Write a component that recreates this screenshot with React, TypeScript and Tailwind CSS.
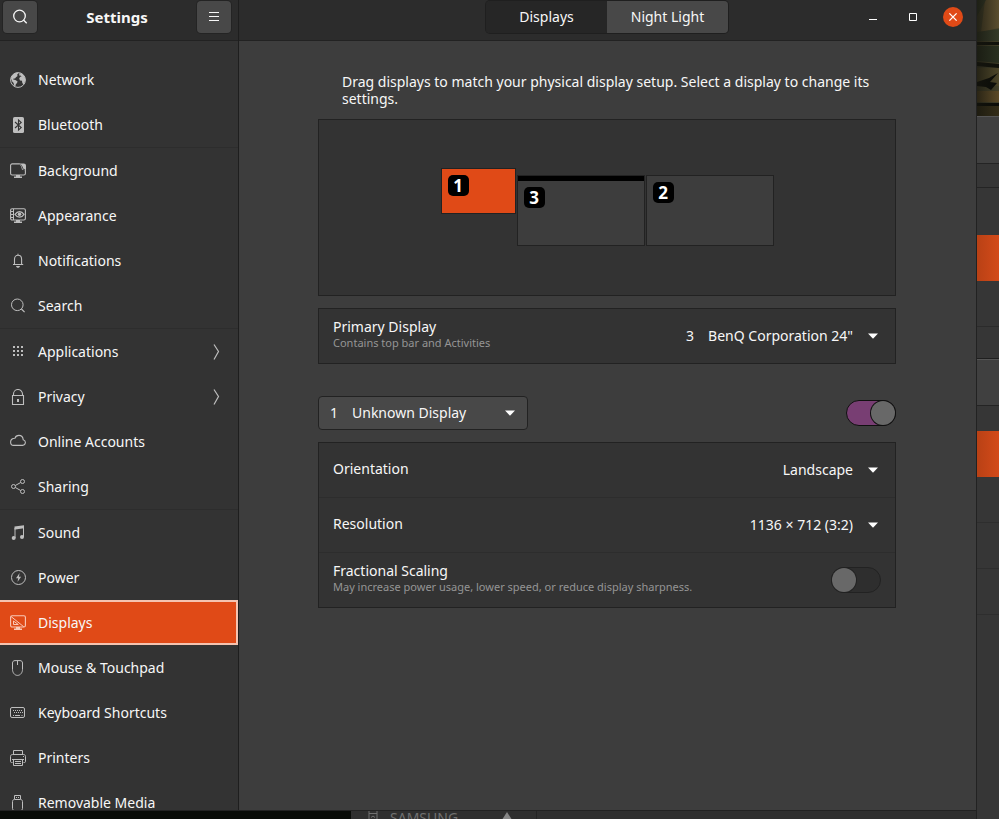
import { Fragment, useState } from "react";
import type { ReactNode } from "react";

function Icon({ children, className = "size-4" }: { children: ReactNode; className?: string }) {
  return (
    <svg
      viewBox="0 0 16 16"
      className={`${className} shrink-0`}
      fill="none"
      stroke="currentColor"
      strokeWidth="1"
      aria-hidden="true"
    >
      {children}
    </svg>
  );
}

const icons: Record<string, ReactNode> = {
  Network: (
    <Icon>
      <circle cx="8" cy="8" r="7.4" />
      <path
        fill="currentColor"
        stroke="none"
        d="M1 6.5C1.6 3.6 4 1 7.4.6L8.6 2 7 2.6 7.6 4 6 5.2 5 6.6 3.6 6.4 3.2 7.4 5.4 8 7.6 9.4 7 11 5.8 12.2 5.4 14.6 4 13.6 3.6 11 2.2 9.4ZM9.6 1 12.6 2 14.6 4.6 15.4 8 14.4 11.6 13.2 12.6 12.2 10.6 12 8.8 10 8.4 9.2 6.6 10.2 4.8 11.6 4.4 10.4 3.6 9.4 3.8 9.2 2.6Z"
      />
    </Icon>
  ),
  Bluetooth: (
    <Icon>
      <rect x="3" y="0" width="11" height="16" rx="1.6" fill="currentColor" stroke="none" />
      <path stroke="#333333" strokeWidth="1.1" d="M5 5l6.2 5.6L8.5 13V3l2.7 2.4L5 11" />
    </Icon>
  ),
  Background: (
    <Icon>
      <path d="M9.5.9H2.2A1.6 1.6 0 0 0 .6 2.5v7.9A1.6 1.6 0 0 0 2.2 12h11.6a1.6 1.6 0 0 0 1.6-1.6V6" strokeWidth="1.1" />
      <path fill="currentColor" stroke="none" d="M8.6.4h5.2A2.2 2.2 0 0 1 16 2.6v5.8c-1-1.2-2.4-1.6-4-1.6-.4-2.6-1.2-5-3.4-6.4ZM6 12h4v1.6h2V15H4v-1.4h2Z" />
      <path stroke="#333333" strokeWidth=".8" d="M10.6 1.4C12 3 12.800 5 13 6.200c.8 0 1.600.2 2.200.6" />
    </Icon>
  ),
  Appearance: (
    <Icon>
      <rect x=".6" y=".7" width="14.8" height="11.3" rx="1.5" strokeWidth="1.1" />
      <path d="M3.500 1v11M1 3.500h3M1 6.500h3M1 9.500h3" />
      <path strokeWidth="1.200" d="M5 6.400C6.500 4.200 8 3.600 9.600 3.600s3 .8 4.400 2.800C12.600 8.600 11.200 9.200 9.600 9.200S6.500 8.600 5 6.400Z" />
      <circle cx="9.5" cy="6.3" r="1.8" fill="currentColor" stroke="none" />
      <path fill="currentColor" stroke="none" d="M6 12h4v1.6h2V15H4v-1.4h2Z" />
    </Icon>
  ),
  Notifications: (
    <Icon>
      <path d="M8 .8v1.4M3 11.5h10.2M4.5 11.3V6.2C4.5 3.8 6 2.3 8 2.3s3.6 1.5 3.6 3.9v5.1" strokeWidth="1.1" />
      <path d="M6 13h4c-.2 1-1 1.8-2 1.8S6.200 14 6 13Z" fill="currentColor" stroke="none" />
    </Icon>
  ),
  Search: (
    <Icon>
      <circle cx="7.3" cy="6.8" r="5.8" />
      <path d="m11.4 11 3.2 3.2" strokeWidth="1.2" />
    </Icon>
  ),
  Applications: (
    <Icon>
      <path
        fill="currentColor"
        stroke="none"
        d="M3 2h2v2H3zM7 2h2v2H7zM11 2h2v2h-2zM3 6h2v2H3zM7 6h2v2H7zM11 6h2v2h-2zM3 10h2v2H3zM7 10h2v2H7zM11 10h2v2h-2z"
      />
    </Icon>
  ),
  Privacy: (
    <Icon>
      <path d="M2.5 6.5h11v9h-11zM3.5 6.500V5a4.500 4.500 0 0 1 9 0v1.500" strokeWidth="1.1" />
      <path fill="currentColor" stroke="none" d="M7 10h2v3H7z" />
    </Icon>
  ),
  "Online Accounts": (
    <Icon>
      <path d="M3.6 11.400h9a2.900 2.900 0 0 0 .6-5.700C13 3 11.200 1.400 8.900 1.400c-2 0-3.400 1.100-4 2.900C2.400 4.200.6 5.700.6 7.900c0 2 1.300 3.500 3 3.500Z" strokeWidth="1.1" />
    </Icon>
  ),
  Sharing: (
    <Icon>
      <circle cx="3.5" cy="7.500" r="2" />
      <circle cx="12.5" cy="2.500" r="2" />
      <circle cx="12.5" cy="12.500" r="2" />
      <path d="m5.3 6.500 5.400-3M5.3 8.500l5.400 3" />
    </Icon>
  ),
  Sound: (
    <Icon>
      <path fill="currentColor" stroke="none" d="M4.5 1.600 14 .3V3.200L5.5 4.400 4.5 4.500Z" />
      <path d="M5 3v10M13.5 2v10" />
      <circle cx="3.7" cy="13" r="2" fill="currentColor" stroke="none" />
      <circle cx="12" cy="12" r="2" fill="currentColor" stroke="none" />
    </Icon>
  ),
  Power: (
    <Icon>
      <circle cx="8.5" cy="7.5" r="7" />
      <path fill="currentColor" stroke="none" d="M9.6 3 6 8.300h2.200L7.500 12l3.600-5.300H8.900Z" />
    </Icon>
  ),
  Displays: (
    <Icon>
      <rect x=".6" y=".7" width="14.8" height="11.3" rx="1.5" strokeWidth="1.1" />
      <path d="m1 1.5 12.800 10.300M3.500 6v3.500H8.300Z" />
      <path fill="currentColor" stroke="none" d="M6 12h4v1.6h2V15H4v-1.4h2Z" />
    </Icon>
  ),
  "Mouse & Touchpad": (
    <Icon>
      <path d="M5 .6h5c1.600 0 2.500 1 2.500 2.400v6.400c0 3.100-2 6-5 6s-5-2.900-5-6V3C2.500 1.600 3.400.6 5 .6ZM7.500.6V5" />
    </Icon>
  ),
  "Keyboard Shortcuts": (
    <Icon>
      <rect x=".5" y="2.500" width="14" height="10" rx="1.5" />
      <path d="M3 5.500h10M4 7.500h9" strokeDasharray="1 1" />
      <path d="M3 10.500h1M5 10.500h5M11.500 10.500h1" />
    </Icon>
  ),
  Printers: (
    <Icon>
      <path d="M3.5 4.500v-4h9v4M2.500 12.500h-1c-.6 0-1-.5-1-1v-5c0-1.200.8-2 2-2h11c1.200 0 2 .8 2 2v5c0 .5-.4 1-1 1h-1M3.500 9.500v6h9v-6M2 9.500h12M5 11.500h6M5 13.500h6" />
      <path d="M13 6.500h1" />
    </Icon>
  ),
  "Removable Media": (
    <Icon>
      <path d="M4.5 4V.5h6V4M4.500 4.500h6c1.200 0 2 .8 2 2v7c0 1.200-.8 2-2 2h-6c-1.200 0-2-.8-2-2v-7c0-1.200.8-2 2-2Z" />
      <path d="M6 2.500h1M8 2.500h1" />
    </Icon>
  ),
};

const groups = [
  ["Network", "Bluetooth"],
  ["Background", "Appearance", "Notifications", "Search"],
  ["Applications", "Privacy", "Online Accounts", "Sharing"],
  ["Sound", "Power", "Displays", "Mouse & Touchpad", "Keyboard Shortcuts", "Printers", "Removable Media"],
];

const submenus = ["Applications", "Privacy"];

function Sidebar() {
  const [active, setActive] = useState("Displays");
  return (
    <aside className="flex w-[239px] shrink-0 flex-col border-r border-[#1e1e1e] bg-[#333333]">
      <header className="flex h-[41px] shrink-0 items-start justify-between border-b border-[#222222] bg-[#2c2c2c] pt-px pr-[7px] pl-[3px]">
        <button
          aria-label="Search settings"
          className="flex h-8 w-[34px] items-center justify-center rounded-[4px] bg-[#484848] ring-1 ring-[#242424]"
        >
          <Icon>
            <circle cx="7.5" cy="7" r="5.8" strokeWidth="1.3" />
            <path d="m11.5 11 3.200 3.300" strokeWidth="1.3" />
          </Icon>
        </button>
        <h1 className="text-[15px] font-bold leading-8">Settings</h1>
        <button
          aria-label="Menu"
          className="flex h-8 w-[34px] items-center justify-center rounded-[4px] bg-[#484848] ring-1 ring-[#242424]"
        >
          <Icon>
            <path d="M3 3.500h10M3 7.500h10M3 11.500h10" />
          </Icon>
        </button>
      </header>
      <nav aria-label="Settings panels" className="min-h-0 flex-1 overflow-hidden pt-4">
        {groups.map((group, i) => (
          <Fragment key={i}>
            {i > 0 && <hr className="border-t border-[#2d2d2d]" />}
            {group.map((name) => (
              <button
                key={name}
                onClick={() => setActive(name)}
                aria-current={active === name ? "page" : undefined}
                className={`flex h-[45px] w-full items-center gap-3 pr-[14px] text-left outline-none ${
                  active === name
                    ? "border-2 border-l-0 border-[#f5c3b0] bg-[#e04a17] pl-[10px] text-[#f9c9b8]"
                    : "pl-[10px] text-[#bebebe]"
                }`}
              >
                {icons[name]}
                <span className="flex-1 whitespace-nowrap text-[#f7f7f7]">{name}</span>
                {submenus.includes(name) && (
                  <Icon>
                    <path d="m6 .5 4.500 7-4.500 8" strokeWidth="1.2" />
                  </Icon>
                )}
              </button>
            ))}
          </Fragment>
        ))}
      </nav>
    </aside>
  );
}

function WindowBar() {
  const [tab, setTab] = useState("Displays");
  return (
    <header className="grid h-[41px] shrink-0 grid-cols-[1fr_auto_1fr] border-b border-[#222222] bg-[#2c2c2c] pt-px pr-px">
      <div role="tablist" className="col-start-2 flex h-8 overflow-hidden rounded-[4px] ring-1 ring-[#1f1f1f]">
        {["Displays", "Night Light"].map((name) => (
          <button
            key={name}
            role="tab"
            aria-selected={tab === name}
            onClick={() => setTab(name)}
            className={`w-[121px] pb-0.5 ${tab === name ? "bg-[#262626]" : "bg-[#484848]"}`}
          >
            {name}
          </button>
        ))}
      </div>
      <div className="flex h-8 items-center justify-end gap-5 pr-3">
        <button aria-label="Minimize" className="size-5">
          <svg viewBox="0 0 20 20" className="size-5">
            <path d="M6 13h8v-1H6z" fill="#ffffff" />
          </svg>
        </button>
        <button aria-label="Maximize" className="size-5">
          <svg viewBox="0 0 20 20" className="size-5" fill="none" stroke="#ffffff">
            <path d="M6.500 6.500h7v7h-7z" />
          </svg>
        </button>
        <button aria-label="Close" className="size-5 rounded-full bg-[#e04a17]">
          <svg viewBox="0 0 20 20" className="size-5" stroke="#ffffff" strokeWidth="1.3">
            <path d="m6.400 6.400 7.200 7.200M13.600 6.400l-7.200 7.200" />
          </svg>
        </button>
      </div>
    </header>
  );
}

function Caret() {
  return (
    <svg viewBox="0 0 10 6" className="pointer-events-none -ml-[23px] h-[6px] w-[10px]" aria-hidden="true">
      <path d="M0 .5h10L5 5.800Z" fill="#ffffff" />
    </svg>
  );
}

function RowSelect({ id, options }: { id: string; options: string[] }) {
  return (
    <div className="flex items-center pr-[17px]">
      <select id={id} className="h-8 appearance-none bg-transparent pr-[38px] pb-0.5 outline-none [field-sizing:content]">
        {options.map((o) => (
          <option key={o}>{o}</option>
        ))}
      </select>
      <Caret />
    </div>
  );
}

function Monitor({ n, className, primary }: { n: number; className: string; primary?: boolean }) {
  return (
    <button aria-label={`Display ${n}`} className={`flex flex-col border border-[#222222] ${className}`}>
      {primary && <span className="h-[5px] w-full bg-black" />}
      <span className="m-[6px] flex size-[21px] items-center justify-center rounded-[5px] bg-black text-[17px] font-bold leading-5 text-white">
        {n}
      </span>
    </button>
  );
}

function RowLabel({ htmlFor, title, note }: { htmlFor: string; title: string; note?: string }) {
  return (
    <label htmlFor={htmlFor} className="flex flex-col pb-0.5 leading-4">
      {title}
      {note && <span className="text-[11px] leading-4 text-[#959595]">{note}</span>}
    </label>
  );
}

const rowClass = "flex h-[54px] items-center justify-between pl-[14px]";
const dividedRowClass = "flex h-[55px] items-center justify-between pl-[14px]";
const panelClass = "border border-[#222222] bg-[#333333]";
const switchClass =
  "h-[26px] w-[50px] appearance-none rounded-full border border-[#222222] bg-[#2e2e2e] before:block before:size-6 before:rounded-full before:bg-[#686868] before:ring-1 before:ring-[#222222] checked:border-[#101010] checked:bg-[#783e73] checked:pl-6 checked:before:ring-[#101010]";

function DisplaysPanel() {
  return (
    <main className="mx-auto flex w-full max-w-[579px] flex-col pt-8 pr-px">
      <p className="px-6 leading-[17px]">
        Drag displays to match your physical display setup. Select a display to change its settings.
      </p>
      <div className={`mt-3 flex h-[177px] items-center justify-center pb-px ${panelClass}`}>
        <div className="flex items-start gap-px">
          <Monitor n={1} className="h-[46px] w-[75px] bg-[#e04a17]" />
          <Monitor n={3} primary className="mt-[7px] h-[71px] w-32 bg-[#3d3d3d]" />
          <Monitor n={2} className="mt-[7px] h-[71px] w-32 bg-[#3d3d3d]" />
        </div>
      </div>

      <div className={`mt-3 ${panelClass}`}>
        <div className={rowClass}>
          <RowLabel htmlFor="primary" title="Primary Display" note="Contains top bar and Activities" />
          <RowSelect id="primary" options={['3\u2003BenQ Corporation 24"', "1\u2003Unknown Display"]} />
        </div>
      </div>

      <div className="mt-8 flex items-center justify-between">
        <div className="flex items-center">
          <select
            aria-label="Display"
            className="h-[34px] w-[210px] appearance-none rounded-[4px] border border-[#222222] bg-[#484848] pb-0.5 pl-[11px] outline-none"
          >
            <option>{"1\u2003Unknown Display"}</option>
            <option>{'3\u2003BenQ Corporation 24"'}</option>
          </select>
          <Caret />
        </div>
        <input type="checkbox" role="switch" aria-label="Enable display" defaultChecked className={switchClass} />
      </div>

      <div className={`mt-3 divide-y divide-[#2d2d2d] ${panelClass}`}>
        <div className={dividedRowClass}>
          <RowLabel htmlFor="orientation" title="Orientation" />
          <RowSelect id="orientation" options={["Landscape", "Portrait Left", "Portrait Right"]} />
        </div>
        <div className={dividedRowClass}>
          <RowLabel htmlFor="resolution" title="Resolution" />
          <RowSelect id="resolution" options={["1136 × 712 (3:2)", "1024 × 768 (4:3)"]} />
        </div>
        <div className={`pr-[14px] ${rowClass}`}>
          <RowLabel
            htmlFor="fractional"
            title="Fractional Scaling"
            note="May increase power usage, lower speed, or reduce display sharpness."
          />
          <input id="fractional" type="checkbox" role="switch" className={switchClass} />
        </div>
      </div>
    </main>
  );
}

function WindowsBehind() {
  return (
    <div aria-hidden="true" className="flex w-[23px] shrink-0 flex-col overflow-hidden border-l border-[#222222] bg-[#363636]">
      <svg viewBox="0 0 22 116" preserveAspectRatio="none" className="h-[116px] w-full shrink-0">
        <defs>
          <linearGradient id="cloth" x1="0" x2="1">
            <stop offset="0" stopColor="#15150e" stopOpacity=".7" />
            <stop offset="1" stopColor="#15150e" stopOpacity="0" />
          </linearGradient>
        </defs>
        <path fill="#44412a" d="M0 0h22v116H0z" />
        <path fill="#5b4e2f" d="M8 0h14v28L4 32Z" />
        <path fill="#343a28" d="M0 0h9L0 16ZM0 32l22-3v12H0Z" />
        <path fill="#10110b" d="M0 42h22v3H0zM0 62l22 2v4L0 66Z" />
        <path fill="#293020" d="M0 46h22v17L0 61Z" />
        <path fill="#4d4629" d="M0 68h22v18H0z" />
        <path fill="#0b0c08" d="m0 82 12-4 9-5-8 9 7 1-6 7-5-3-9-1ZM0 103h22v3H0z" />
        <path fill="#5c4a27" d="M0 91h22v11H0z" />
        <path fill="#342d18" d="M0 106h22v10H0z" />
        <path fill="url(#cloth)" d="M0 0h22v116H0z" />
      </svg>
      <div className="h-[47px] shrink-0 border-t border-[#555555] bg-[#404040]" />
      <div className="h-[25px] shrink-0 border-y border-[#242424]" />
      <div className="h-[47px] shrink-0" />
      <div className="h-[46px] shrink-0 bg-gradient-to-r from-[#b94115] to-[#d34a19]" />
      <div className="h-[46px] shrink-0 border-b border-[#2b2b2b]" />
      <div className="h-8 shrink-0 border-b border-[#1f1f1f]" />
      <div className="h-[46px] shrink-0 border-t border-[#555555] bg-[#404040]" />
      <div className="h-[26px] shrink-0 border-t border-[#242424]" />
      <div className="h-[46px] shrink-0 bg-gradient-to-r from-[#b94115] to-[#d34a19]" />
      <div className="h-[46px] shrink-0 border-b border-[#2e2e2e]" />
      <div className="h-[46px] shrink-0 border-b border-[#2e2e2e]" />
      <div className="h-[46px] shrink-0 border-b border-[#2e2e2e]" />
    </div>
  );
}

function BottomEdge() {
  return (
    <div aria-hidden="true" className="flex h-2 shrink-0 items-start overflow-hidden bg-[#2f2f2f] text-[#707070]">
      <div className="h-full w-[351px] bg-[#080b07]" />
      <svg viewBox="0 0 10 8" className="ml-[17px] h-2 w-[10px]" fill="none" stroke="currentColor">
        <path d="M1 0v8M9 0v8M1 2.500h8M3 6.500 5 5l2 1.500" />
      </svg>
      <span className="ml-3 leading-[13px]">SAMSUNG</span>
      <svg viewBox="0 0 10 8" className="ml-11 h-2 w-[10px]">
        <path d="m5 1 4.500 7h-9Z" fill="#858585" />
      </svg>
      <div className="ml-6 h-full w-px bg-[#242424]" />
    </div>
  );
}

export default function App() {
  return (
    <div className="flex h-screen overflow-hidden bg-[#363636] font-['Noto_Sans','Open_Sans',sans-serif] text-[14px] text-[#f7f7f7]">
      <div className="flex min-w-0 flex-1 flex-col">
        <div className="flex min-h-0 flex-1 border-b border-[#222222]">
          <Sidebar />
          <section className="flex min-w-0 flex-1 flex-col bg-[#3d3d3d]">
            <WindowBar />
            <DisplaysPanel />
          </section>
        </div>
        <BottomEdge />
      </div>
      <WindowsBehind />
    </div>
  );
}
